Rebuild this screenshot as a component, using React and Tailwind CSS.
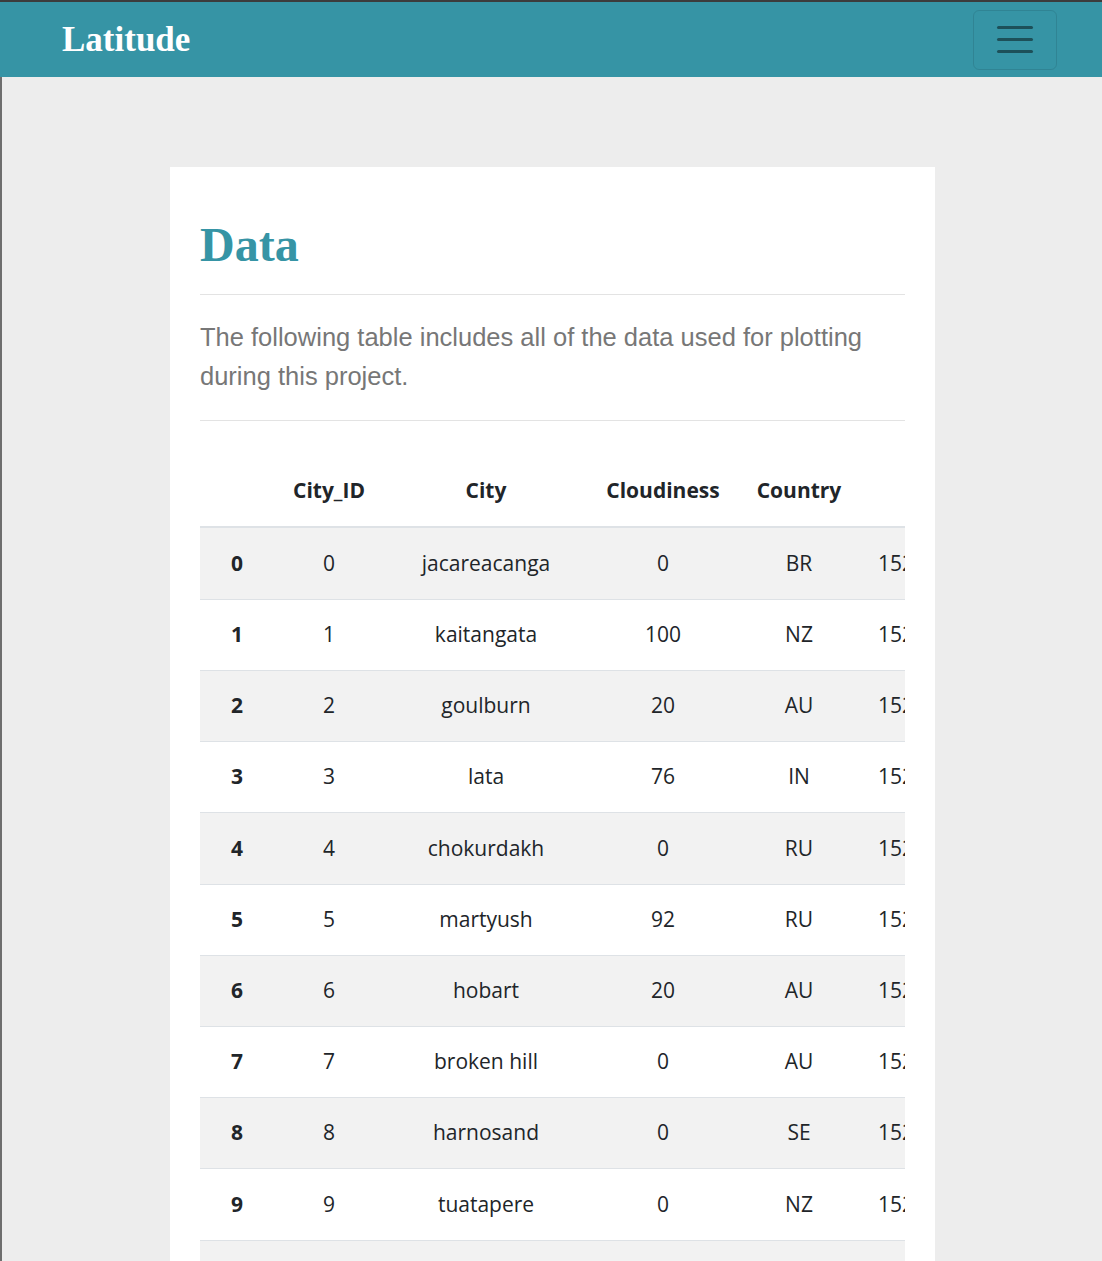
import React from "react";

const rows = [
  [0, 0, "jacareacanga", 0, "BR", 1528970363],
  [1, 1, "kaitangata", 100, "NZ", 1528970228],
  [2, 2, "goulburn", 20, "AU", 1528968600],
  [3, 3, "lata", 76, "IN", 1528970364],
  [4, 4, "chokurdakh", 0, "RU", 1528970165],
  [5, 5, "martyush", 92, "RU", 1528968600],
  [6, 6, "hobart", 20, "AU", 1528968600],
  [7, 7, "broken hill", 0, "AU", 1528968600],
  [8, 8, "harnosand", 0, "SE", 1528968600],
  [9, 9, "tuatapere", 0, "NZ", 1528970366],
  [10, 10, "saskylakh", 64, "RU", 1528970366],
];

const cols = ["w-[74px]", "w-[110px]", "w-[204px]", "w-[150px]", "w-[122px]", "w-[156px]", "w-[120px]"];

export default function App() {
  return (
    <div className="min-h-screen bg-[#ededed] border-t-2 border-[#3c3c3c]" style={{ fontFamily: "'Liberation Sans', Arial, sans-serif" }}>
      <nav className="h-[75px] bg-[#3694a5] flex items-center justify-between pl-[62px] pr-[45px]">
        <span className="text-white font-bold text-[35px] leading-none" style={{ fontFamily: "'Liberation Serif', 'DejaVu Serif', serif" }}>
          Latitude
        </span>
        <button className="w-[84px] h-[60px] rounded-[6px] border border-[rgba(0,0,0,0.1)] flex flex-col items-center justify-center gap-[9.5px]">
          <span className="block w-[36px] h-[2.5px] bg-[#1d5059] rounded-full"></span>
          <span className="block w-[36px] h-[2.5px] bg-[#1d5059] rounded-full"></span>
          <span className="block w-[36px] h-[2.5px] bg-[#1d5059] rounded-full"></span>
        </button>
      </nav>
      <div className="border-l-2 border-[#6e6e6e] min-h-[1184px] pt-[90px]">
        <div className="ml-[168px] w-[765px] bg-white px-[30px] pt-[49px] pb-[40px]">
          <h1 className="text-[48px] leading-[58px] font-bold text-[#3694a5]" style={{ fontFamily: "'Liberation Serif', 'DejaVu Serif', serif" }}>
            Data
          </h1>
          <hr className="mt-[20px] border-0 border-t border-[#e3e3e3]" />
          <p className="mt-[23px] text-[25.5px] leading-[39px] text-[#777777]">
            The following table includes all of the data used for plotting during this project.
          </p>
          <hr className="mt-[24px] border-0 border-t border-[#e3e3e3]" />
          <div className="mt-[35px] overflow-hidden text-[#212529] text-[21px]" style={{ fontFamily: "'Open Sans', 'Noto Sans', sans-serif" }}>
            <div className="w-max">
              <div className="flex h-[72px] items-center border-b-2 border-[#dee2e6] font-bold">
                {["", "City_ID", "City", "Cloudiness", "Country", "Date", "Humidity"].map((h, i) => (
                  <div key={i} className={`${cols[i]} shrink-0 text-center`}>{h}</div>
                ))}
              </div>
              {rows.map((r, ri) => (
                <div key={ri} className={`flex ${ri % 5 === 4 ? "h-[72px]" : "h-[71px]"} items-center ${ri > 0 ? "border-t border-[#dee2e6]" : ""} ${ri % 2 === 0 ? "bg-[#f2f2f2]" : "bg-white"}`}>
                  {[...r, 80].map((c, ci) => (
                    <div key={ci} className={`${cols[ci]} shrink-0 text-center ${ci === 0 ? "font-bold" : ""}`}>{c}</div>
                  ))}
                </div>
              ))}
            </div>
          </div>
        </div>
      </div>
    </div>
  );
}
